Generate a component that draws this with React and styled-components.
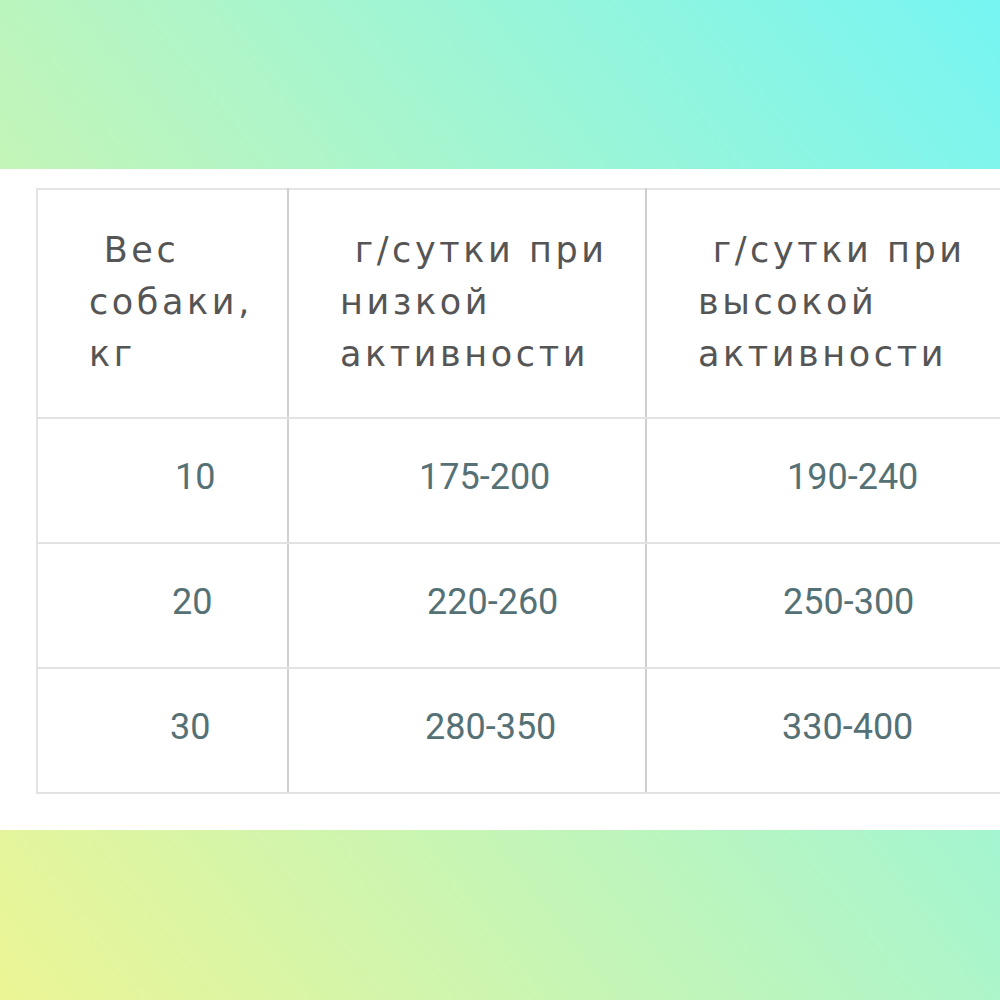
import React from "react"
import styled, { createGlobalStyle } from "styled-components"

const GlobalStyle = createGlobalStyle`
  html, body {
    margin: 0;
    padding: 0;
    overflow: hidden;
  }
`

const Page = styled.div`
  width: 1000px;
  height: 1000px;
  display: flex;
  flex-direction: column;
  background: linear-gradient(52deg, #ecf595 0%, #b4f5c4 50%, #76f5f3 100%);
  overflow: hidden;
`
const Band = styled.div`
  height: ${props => props.h}px;
  flex-shrink: 0;
`
const Sheet = styled.div`
  height: 661px;
  flex-shrink: 0;
  background: #ffffff;
  padding: 19px 0 0 36px;
  box-sizing: border-box;
`
const Table = styled.table`
  border-collapse: collapse;
  table-layout: fixed;
  width: 1000px;
  border: 2px solid #e4e4e4;
`
const HeadCell = styled.th`
  height: 223px;
  padding: 0 0 4px 51px;
  text-align: left;
  vertical-align: middle;
  font-family: "DejaVu Sans", sans-serif;
  font-weight: 400;
  font-size: 35px;
  line-height: 52px;
  letter-spacing: 3.6px;
  color: #555555;
  border-left: 2px solid #cfcfcf;
  border-bottom: 2px solid #e2e2e2;
  &:first-child {
    border-left: none;
  }
`
const Cell = styled.td`
  height: 116px;
  padding: 0 0 7px ${props => props.indent}px;
  vertical-align: middle;
  font-family: Roboto, "Liberation Sans", sans-serif;
  font-weight: 400;
  font-size: 36px;
  color: #557175;
  border-left: 2px solid #cfcfcf;
  border-bottom: 2px solid #e2e2e2;
  &:first-child {
    border-left: none;
  }
`

const rows = [
  [["10", 137], ["175-200", 130], ["190-240", 140]],
  [["20", 134], ["220-260", 138], ["250-300", 136]],
  [["30", 132], ["280-350", 136], ["330-400", 135]]
]

const App = () => (
  <Page>
    <GlobalStyle />
    <Band h={169} />
    <Sheet>
      <Table>
        <colgroup>
          <col style={{ width: 251 }} />
          <col style={{ width: 358 }} />
          <col style={{ width: 391 }} />
        </colgroup>
        <thead>
          <tr>
            <HeadCell>
              &nbsp;Вес
              <br />
              собаки,
              <br />
              кг
            </HeadCell>
            <HeadCell>
              &nbsp;г/сутки при
              <br />
              низкой
              <br />
              активности
            </HeadCell>
            <HeadCell>
              &nbsp;г/сутки при
              <br />
              высокой
              <br />
              активности
            </HeadCell>
          </tr>
        </thead>
        <tbody>
          {rows.map((row, i) => (
            <tr key={i}>
              {row.map(([text, indent], j) => (
                <Cell key={j} indent={indent}>
                  {text}
                </Cell>
              ))}
            </tr>
          ))}
        </tbody>
      </Table>
    </Sheet>
    <Band h={170} />
  </Page>
)

export default App
